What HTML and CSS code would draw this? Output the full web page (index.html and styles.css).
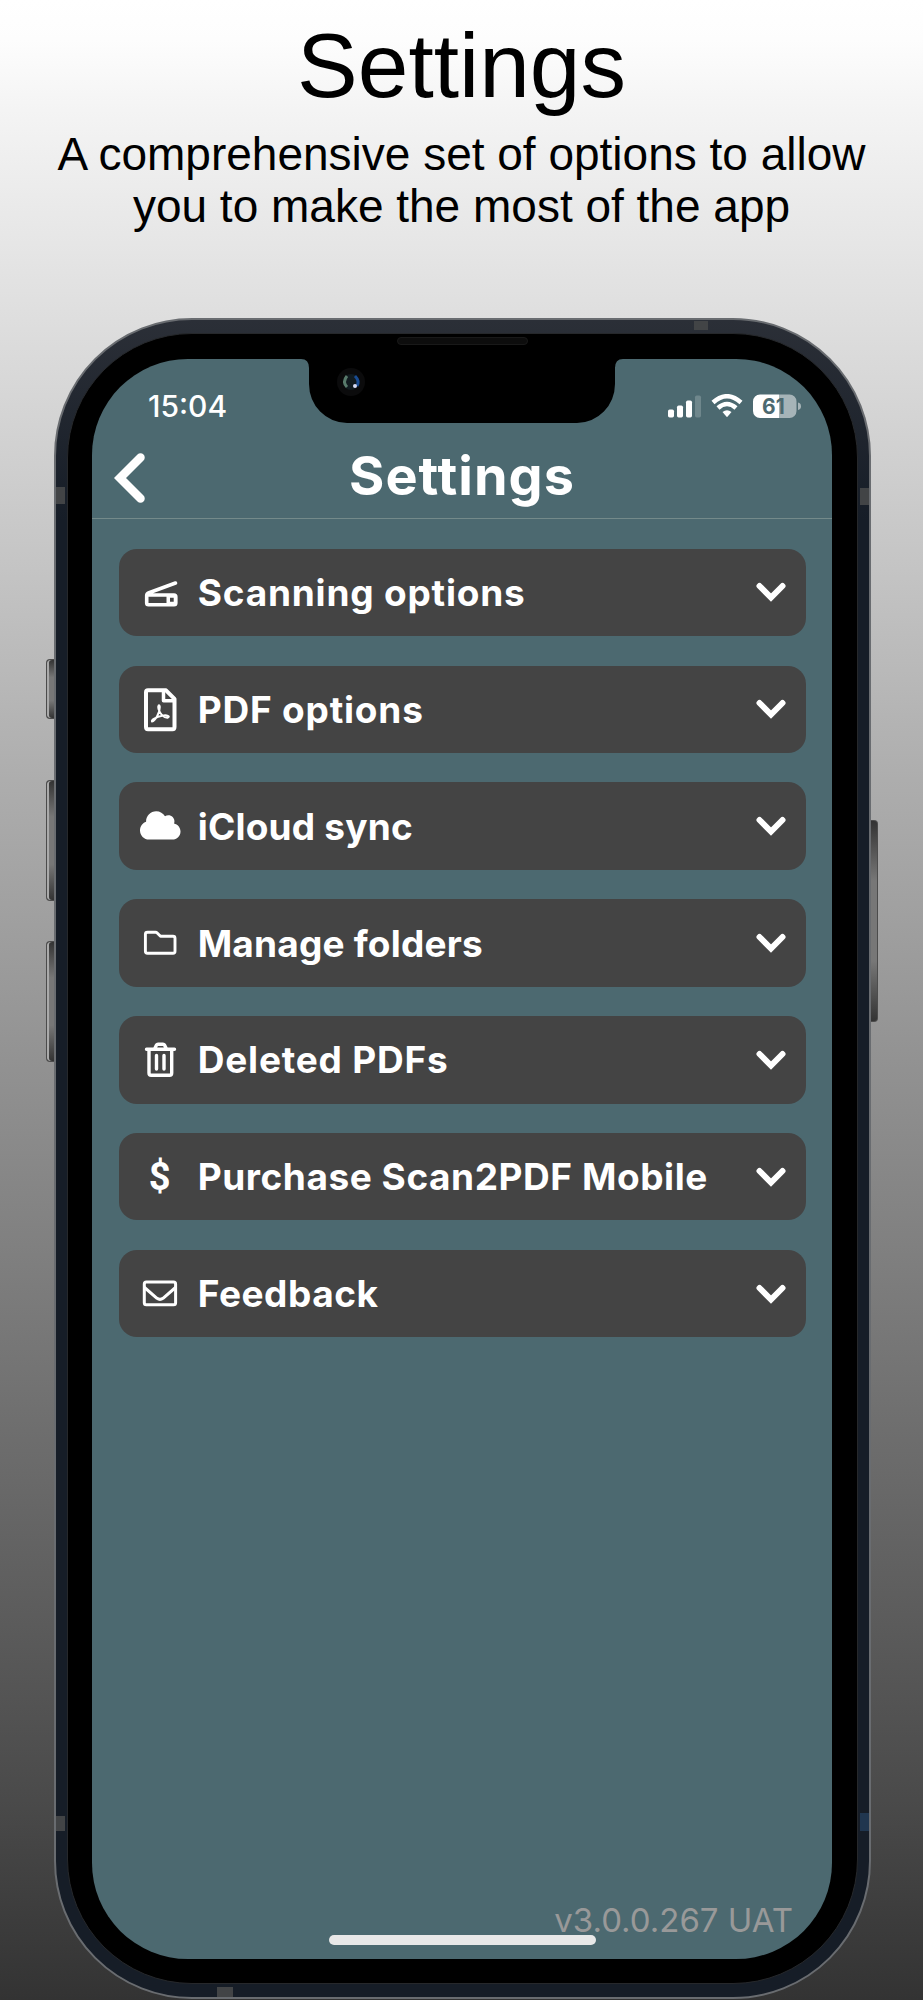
FILE: index.html
```html
<!DOCTYPE html>
<html lang="en">
<head>
  <meta charset="UTF-8">
  <meta name="viewport" content="width=device-width, initial-scale=1.0">
  <title>Settings</title>
  <link rel="stylesheet" href="styles.css">
</head>
<body>
  <header class="promo">
    <h1>Settings</h1>
    <p>A comprehensive set of options to allow<br>you to make the most of the app</p>
  </header>

  <div class="phone">
    <span class="key key-mute"></span>
    <span class="key key-up"></span>
    <span class="key key-down"></span>
    <span class="key key-power"></span>
    <span class="band band-top"></span>
    <span class="band band-left"></span>
    <span class="band band-right"></span>
    <span class="band band-left-low"></span>
    <span class="band band-right-low"></span>
    <span class="band band-bottom"></span>

    <div class="bezel">
      <span class="speaker"></span>
      <div class="screen">
        <svg class="notch" width="322" height="64" viewBox="0 0 322 64">
          <path d="M0 0H322Q314 0 314 9V25A38 39 0 0 1 276 64H46A38 39 0 0 1 8 25V9Q8 0 0 0Z"/>
          <circle class="cam-ring" cx="50" cy="23" r="14"/>
          <circle class="cam-glass" cx="50" cy="23" r="8"/>
          <path class="cam-green" d="M46 17Q41 23 46 28"/>
          <path class="cam-blue" d="M54 17Q59 22 56 27"/>
          <circle class="cam-dot" cx="54" cy="27" r="2"/>
        </svg>

        <div class="status">
          <span class="time">15:04</span>
          <svg class="indicators" width="134" height="26" viewBox="0 0 134 26">
            <rect x="0" y="15.5" width="6" height="8" rx="1.7"/>
            <rect x="9" y="11.5" width="6" height="12" rx="1.7"/>
            <rect x="18" y="6.5" width="6" height="17" rx="1.7"/>
            <rect class="dim" x="27" y="1.5" width="6" height="22" rx="1.7"/>
            <g class="wifi">
              <path d="M45 8.5Q59 -4 73 8.5"/>
              <path d="M50 14Q59 6 68 14"/>
            </g>
            <path d="M54.5 18Q59 14.5 63.5 18L59 23.2Z"/>
            <path d="M92 .5H111V24H92A7 7 0 0 1 85 17V7.500A7 7 0 0 1 92 .5Z"/>
            <path class="half" d="M111 .5H121.500A7 7 0 0 1 128.500 7.500V17A7 7 0 0 1 121.500 24H111Z"/>
            <path class="half" d="M130 8.500Q133 9 133 12.300T130 16Z"/>
            <text x="94" y="19.500">61</text>
          </svg>
        </div>

        <div class="topbar">
          <svg class="back" width="32" height="52" viewBox="0 0 32 52"><path d="M26.500 5.500L6 26L26.500 46.500"/></svg>
          <h2>Settings</h2>
        </div>

        <ul class="options">
          <li>
            <svg class="icon" width="48" height="48" viewBox="0 0 48 48">
              <path stroke-width="3.600" d="M13 27H38Q39.800 27 39.800 28.800V35Q39.800 36.800 38 36.800H12.500Q10.700 36.800 10.700 35V27.500Q10.700 25.500 13 24.700L39.500 15"/>
              <path class="solid" d="M30.500 28H34V36H30.500ZM37.700 28H40V36H37.700ZM34 27H38V29.800H34ZM34 33.800H38V36H34Z"/>
            </svg>
            <span class="wide">Scanning options</span>
            <svg class="chevron" width="32" height="22" viewBox="0 0 32 22"><path d="M4.500 5L16 16.500L27.500 5"/></svg>
          </li>
          <li>
            <svg class="icon" width="48" height="48" viewBox="0 0 48 48">
              <path stroke-width="4" d="M12 5.300H30L38.500 13.800V42Q38.500 44.200 36.500 44.200H12Q10 44.200 10 42V7.300Q10 5.300 12 5.300Z"/>
              <path stroke-width="3.500" d="M27.500 6V15.800H38"/>
              <path stroke-width="2" d="M16 36.500C19 36 24 28 23.800 22C23.500 18.500 21.500 20.500 22.500 24C24 29 28 33 31.500 32.800C35 31.500 31 29.500 26 30.800C21 32 15 34.500 16 36.500Z"/>
            </svg>
            <span class="wide">PDF options</span>
            <svg class="chevron" width="32" height="22" viewBox="0 0 32 22"><path d="M4.500 5L16 16.500L27.500 5"/></svg>
          </li>
          <li>
            <svg class="icon" width="48" height="48" viewBox="0 0 48 48">
              <path class="solid" transform="translate(4 7.200) scale(.0633)" d="M537.600 226.600c4.100-10.700 6.400-22.400 6.400-34.600 0-53-43-96-96-96-19.700 0-38.100 6-53.300 16.200C367 64.200 315.300 32 256 32c-88.400 0-160 71.600-160 160 0 2.700.1 5.400.2 8.100C40.200 219.800 0 273.200 0 336c0 79.500 64.500 144 144 144h368c70.700 0 128-57.300 128-128 0-61.900-44-113.600-102.400-125.400z"/>
            </svg>
            <span>iCloud sync</span>
            <svg class="chevron" width="32" height="22" viewBox="0 0 32 22"><path d="M4.500 5L16 16.500L27.500 5"/></svg>
          </li>
          <li>
            <svg class="icon" width="48" height="48" viewBox="0 0 48 48">
              <path stroke-width="2.900" d="M11.500 13.300H19.500Q20.500 13.300 21.200 14L24.500 17.300H37Q39 17.300 39 19.300V32.300Q39 34.300 37 34.300H11.500Q9.400 34.300 9.400 32.300V15.300Q9.400 13.300 11.500 13.300Z"/>
            </svg>
            <span>Manage folders</span>
            <svg class="chevron" width="32" height="22" viewBox="0 0 32 22"><path d="M4.500 5L16 16.500L27.500 5"/></svg>
          </li>
          <li>
            <svg class="icon" width="48" height="48" viewBox="0 0 48 48">
              <path stroke-width="3.400" d="M10.500 13.200H38.500M13 14V37Q13 39.300 15.200 39.300H33.500Q35.700 39.300 35.700 37V14M18.500 13L20.500 9Q21 8.200 22 8.200H27Q28 8.200 28.500 9L30.500 13M20.500 19.500V33M28 19.500V33"/>
            </svg>
            <span class="wide">Deleted PDFs</span>
            <svg class="chevron" width="32" height="22" viewBox="0 0 32 22"><path d="M4.500 5L16 16.500L27.500 5"/></svg>
          </li>
          <li>
            <span class="icon dollar">$</span>
            <span class="mid">Purchase Scan2PDF Mobile</span>
            <svg class="chevron" width="32" height="22" viewBox="0 0 32 22"><path d="M4.500 5L16 16.500L27.500 5"/></svg>
          </li>
          <li>
            <svg class="icon" width="48" height="48" viewBox="0 0 48 48">
              <rect stroke-width="3" x="8.300" y="12.100" width="31.300" height="22.700" rx="2"/>
              <path stroke-width="3" d="M8.500 17.500L21 28.300Q24 30.500 27 28.300L39.500 17.500"/>
            </svg>
            <span class="mid">Feedback</span>
            <svg class="chevron" width="32" height="22" viewBox="0 0 32 22"><path d="M4.500 5L16 16.500L27.500 5"/></svg>
          </li>
        </ul>

        <footer class="version">v3.0.0.267 UAT</footer>
        <span class="home-bar"></span>
      </div>
    </div>
  </div>
</body>
</html>
```
FILE: styles.css
```css
* {
  box-sizing: border-box;
}
body {
  margin: 0;
  height: 2000px;
  overflow: hidden;
  font-family: Inter, "Liberation Sans", sans-serif;
  background: linear-gradient(#fff 0, #fdfdfd 40px, #f4f4f4 110px, #e0e0e0 300px, #c5c5c5 560px, #adadad 780px, #929292 1060px, #4a4a4a 1800px, #333 2000px);
}

/* headline */
.promo {
  height: 318px;
  padding-top: 14px;
  text-align: center;
  color: #000;
  font-family: "Liberation Sans", Arial, sans-serif;
}
.promo h1 {
  margin: 0;
  font-size: 91px;
  font-weight: normal;
  line-height: 104px;
}
.promo p {
  margin: 11px 0 0;
  font-size: 46px;
  line-height: 51.5px;
}

/* device */
.phone {
  position: relative;
  width: 817px;
  height: 1681px;
  margin-left: 54px;
  padding: 13px 11px;
  border: 2px solid #696c70;
  border-radius: 138px;
  background: linear-gradient(#2b2f37, #161d27 200px);
}
.bezel {
  position: relative;
  height: 100%;
  padding: 25px 25px 24px 24px;
  border: 1px solid #26282b;
  border-radius: 125px;
  background: #000;
}
.key {
  position: absolute;
  left: -10px;
  width: 8px;
  border: 1px solid #4c4c4c;
  border-right: 0;
  border-radius: 4px 0 0 4px;
  background: linear-gradient(#333, #777 30%, #777 70%, #333);
  box-shadow: inset 2px 0 #aaa;
}
.key-mute {
  top: 339px;
  height: 60px;
}
.key-up {
  top: 460px;
  height: 121px;
}
.key-down {
  top: 621px;
  height: 121px;
}
.key-power {
  left: 815px;
  top: 500px;
  width: 7px;
  height: 202px;
  border: 1px solid #4c4c4c;
  border-left: 0;
  border-radius: 0 4px 4px 0;
  box-shadow: none;
}
.band {
  position: absolute;
  background: #424446;
}
.band-top {
  left: 638px;
  top: 1px;
  width: 14px;
  height: 9px;
}
.band-left,
.band-left-low {
  left: 0;
  top: 167px;
  width: 9px;
  height: 17px;
}
.band-left-low {
  top: 1496px;
  height: 15px;
}
.band-right,
.band-right-low {
  right: 0;
  top: 168px;
  width: 9px;
  height: 17px;
}
.band-right-low {
  top: 1493px;
  height: 18px;
  background: #20364f;
}
.band-bottom {
  left: 161px;
  bottom: 0;
  width: 16px;
  height: 10px;
}
.speaker {
  position: absolute;
  left: 329px;
  top: 3px;
  width: 131px;
  height: 8px;
  border: 1px solid #191919;
  border-radius: 4px;
  background: #0d0d0d;
}

/* screen */
.screen {
  position: relative;
  display: flex;
  flex-direction: column;
  height: 1600px;
  overflow: hidden;
  border-radius: 96px;
  background: #4c6970;
  color: #fff;
}
.notch {
  position: absolute;
  left: 209px;
  top: 0;
}
.notch .cam-ring {
  fill: #0b0b0c;
}
.notch .cam-glass {
  fill: #111b20;
}
.notch .cam-green,
.notch .cam-blue {
  fill: none;
  stroke: #587a6b;
  stroke-width: 3;
}
.notch .cam-blue {
  stroke: #184b91;
}
.notch .cam-dot {
  fill: #d8dcf5;
}
.status {
  display: flex;
  justify-content: space-between;
  height: 80px;
  padding: 29px 30px 0 56px;
}
.time {
  font-size: 30px;
  font-weight: 500;
  line-height: 37px;
}
.indicators {
  margin-top: 6px;
  fill: #fff;
}
.indicators .dim {
  opacity: .2;
}
.indicators .half {
  opacity: .5;
}
.indicators .wifi {
  fill: none;
  stroke: #fff;
  stroke-width: 4.5;
}
.indicators text {
  font-size: 21px;
  font-weight: 700;
  fill: #4c6970;
}
.topbar {
  display: grid;
  grid-template-columns: 60px 1fr 60px;
  align-items: center;
  height: 80px;
  padding-bottom: 1px;
  border-bottom: 1px solid #748a8a;
}
.back {
  margin-left: 22px;
  fill: none;
  stroke: #fff;
  stroke-width: 8.500;
  stroke-linecap: round;
}
.topbar h2 {
  margin: -4px 0 0;
  text-align: center;
  font-size: 54px;
  font-weight: 700;
  line-height: 60px;
  letter-spacing: 1px;
}
.options {
  display: flex;
  flex-direction: column;
  gap: 29.600px;
  margin: 0;
  padding: 29.700px 26px 0 26.700px;
  list-style: none;
}
.options li {
  display: flex;
  align-items: center;
  height: 87.300px;
  padding: 0 19px 0 17px;
  border-radius: 18px;
  background: #444;
  font-size: 37px;
  font-weight: 700;
  letter-spacing: .2px;
  white-space: nowrap;
}
.options .wide {
  letter-spacing: .800px;
}
.options .mid {
  letter-spacing: .550px;
}
.icon {
  flex: none;
  width: 48px;
  margin-right: 14px;
  fill: none;
  stroke: #fff;
  stroke-linecap: round;
  stroke-linejoin: round;
}
.icon .solid {
  fill: #fff;
  stroke: none;
}
.options .dollar {
  text-align: center;
  font-family: Roboto, sans-serif;
  font-size: 38px;
}
.chevron {
  margin-left: auto;
  fill: none;
  stroke: #fff;
  stroke-width: 6;
  stroke-linecap: round;
}
.version {
  margin-top: auto;
  padding: 0 39px 17px 0;
  text-align: right;
  font-size: 33px;
  line-height: 44px;
  color: #999;
}
.home-bar {
  position: absolute;
  left: 237px;
  bottom: 14px;
  width: 267px;
  height: 10px;
  border-radius: 5px;
  background: #e8e8e8;
}
```
